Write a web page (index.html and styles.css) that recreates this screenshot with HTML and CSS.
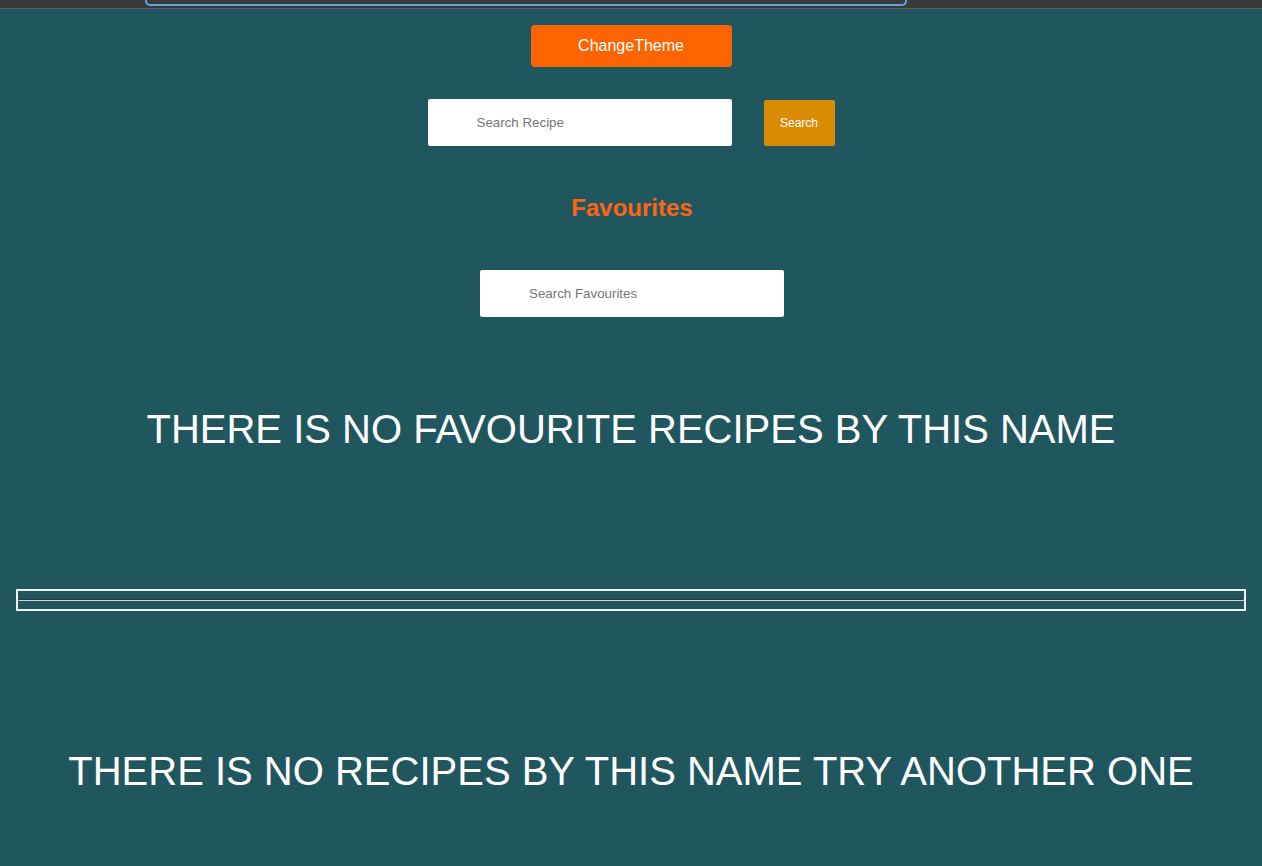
FILE: index.html
```html
<!DOCTYPE html>
<html>
<head>
<meta charset="utf-8">
<link rel="stylesheet" href="styles.css">
</head>
<body>
<div class="chrome"><div class="chrome-field"></div></div>
<main class="page">
  <button class="theme-btn">ChangeTheme</button>
  <div class="search-row">
    <input class="search-input" type="text" placeholder="Search Recipe">
    <button class="search-btn">Search</button>
  </div>
  <h2 class="fav-title">Favourites</h2>
  <input class="search-input fav-input" type="text" placeholder="Search Favourites">
  <h1 class="empty-msg fav-empty">THERE IS NO FAVOURITE RECIPES BY THIS NAME</h1>
  <div class="divider-box"><hr class="divider"></div>
  <h1 class="empty-msg recipe-empty">THERE IS NO RECIPES BY THIS NAME TRY ANOTHER ONE</h1>
</main>
</body>
</html>
```
FILE: styles.css
```css
html, body {
  margin: 0;
  padding: 0;
  background: #20575f;
  font-family: "Liberation Sans", Arial, sans-serif;
}
.chrome {
  height: 8px;
  background: #3a3a3a;
  border-bottom: 1px solid #5c5c5c;
  display: flex;
}
.chrome-field {
  margin-left: 145px;
  width: 758px;
  height: 4px;
  border: 2px solid #5ea3df;
  border-top: none;
  border-radius: 0 0 5px 5px;
}
.page {
  display: flex;
  flex-direction: column;
  align-items: center;
  padding: 16px 16px 0;
}
.theme-btn {
  width: 201px;
  height: 42px;
  background: #fb6400;
  color: #fff;
  border: none;
  border-radius: 4px;
  font-family: "Liberation Sans", Arial, sans-serif;
  font-size: 16px;
  margin: 0;
}
.search-row {
  display: flex;
  gap: 32px;
  margin-top: 32px;
  align-items: flex-start;
}
.search-input {
  width: 304px;
  height: 47px;
  box-sizing: border-box;
  border: none;
  border-radius: 2px;
  background: #fff;
  padding: 0 0 0 49px;
  font-family: "Liberation Sans", Arial, sans-serif;
  font-size: 13.33px;
  color: #333;
  margin: 0;
}
.search-input::placeholder {
  color: #757575;
}
.search-btn {
  width: 71px;
  height: 46px;
  margin-top: 1px;
  background: #da8b04;
  color: #fff;
  border: none;
  border-radius: 2px;
  font-family: "Liberation Sans", Arial, sans-serif;
  font-size: 12px;
  font-weight: normal;
}
.fav-title {
  color: #fd6512;
  font-size: 24px;
  font-weight: bold;
  margin: 48px 0 0;
  line-height: 28px;
  padding-left: 2px;
}
.fav-input {
  margin-top: 48px;
  margin-left: 2px;
}
.empty-msg {
  color: #fff;
  font-weight: normal;
  font-size: 40px;
  line-height: 48px;
  margin: 0;
  text-align: center;
}
.fav-empty {
  margin-top: 88px;
}
.divider-box {
  align-self: stretch;
  border: 2px solid #f2f2f2;
  margin-top: 136px;
  padding: 0;
}
.divider {
  margin: 8px 0;
  border: 1px inset #999;
  border-top-color: #8a8a8a;
  border-bottom-color: #d0d0d0;
  height: 0;
}
.recipe-empty {
  margin-top: 136px;
}
```
